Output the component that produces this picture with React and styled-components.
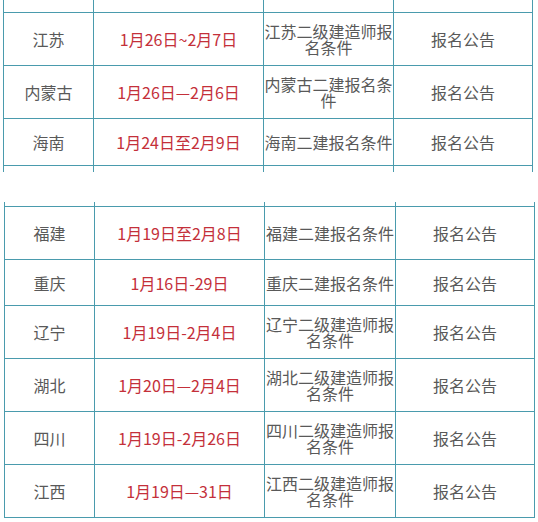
import React from 'react'
import styled, { createGlobalStyle } from 'styled-components'

const GlobalStyle = createGlobalStyle`
    body {
        margin: 0;
        background: #ffffff;
        font-family: "Noto Sans CJK SC", "Microsoft YaHei", sans-serif;
    }
`

const firstTable = [
    { h: 53, place: '江苏', date: '1月26日~2月7日', cond: '江苏二级建造师报名条件' },
    { h: 53, place: '内蒙古', date: '1月26日—2月6日', cond: '内蒙古二建报名条件' },
    { h: 48, place: '海南', date: '1月24日至2月9日', cond: '海南二建报名条件', last: true },
]

const secondTable = [
    { h: 53, place: '福建', date: '1月19日至2月8日', cond: '福建二建报名条件' },
    { h: 46, place: '重庆', date: '1月16日-29日', cond: '重庆二建报名条件' },
    { h: 53, place: '辽宁', date: '1月19日-2月4日', cond: '辽宁二级建造师报名条件' },
    { h: 53, place: '湖北', date: '1月20日—2月4日', cond: '湖北二级建造师报名条件' },
    { h: 53, place: '四川', date: '1月19日-2月26日', cond: '四川二级建造师报名条件' },
    { h: 54, place: '江西', date: '1月19日—31日', cond: '江西二级建造师报名条件', last: true },
]

const Table = ({ rows, offset, cols, top, bottom }) => (
    <Wrap $offset={offset}>
        <Row $cols={cols} $h={top} $open>
            <Cell /><Cell /><Cell /><Cell />
        </Row>
        {rows.map((r) => (
            <Row key={r.place} $cols={cols} $h={r.h} $last={r.last}>
                <Cell>{r.place}</Cell>
                <DateCell>{r.date}</DateCell>
                <CondCell>{r.cond}</CondCell>
                <Cell>报名公告</Cell>
            </Row>
        ))}
        {bottom > 0 && (
            <Row $cols={cols} $h={bottom} $open>
                <Cell /><Cell /><Cell /><Cell />
            </Row>
        )}
    </Wrap>
)

const App = () => {
    return (
        <>
            <GlobalStyle />
            <Page>
                <Table rows={firstTable} offset={3} cols="90px 170px 130px 140px" top={12} bottom={6} />
                <Gap />
                <Table rows={secondTable} offset={4} cols="90px 170px 131px 140px" top={4} bottom={0} />
            </Page>
        </>
    )
}

export default App

const Page = styled.div`
    width: 538px;
    height: 522px;
    overflow: hidden;
`
const Gap = styled.div`
    height: 30px;
`
const Wrap = styled.div`
    margin-left: ${p => p.$offset}px;
    width: fit-content;
`
const Row = styled.div`
    box-sizing: border-box;
    display: grid;
    grid-template-columns: ${p => p.$cols};
    height: ${p => p.$h}px;
    border-top: ${p => (p.$open ? 'none' : '1px solid #4a9bad')};
    border-bottom: ${p => (p.$last ? '1px solid #4a9bad' : 'none')};
`
const Cell = styled.div`
    display: flex;
    align-items: center;
    justify-content: center;
    text-align: center;
    border-left: 1px solid #4a9bad;
    font-size: 16px;
    line-height: 16px;
    color: #595959;
    &:last-child {
        border-right: 1px solid #4a9bad;
    }
`
const DateCell = styled(Cell)`
    color: #c4303a;
`
const CondCell = styled(Cell)`
    padding: 0;
    line-height: 16px;
`
